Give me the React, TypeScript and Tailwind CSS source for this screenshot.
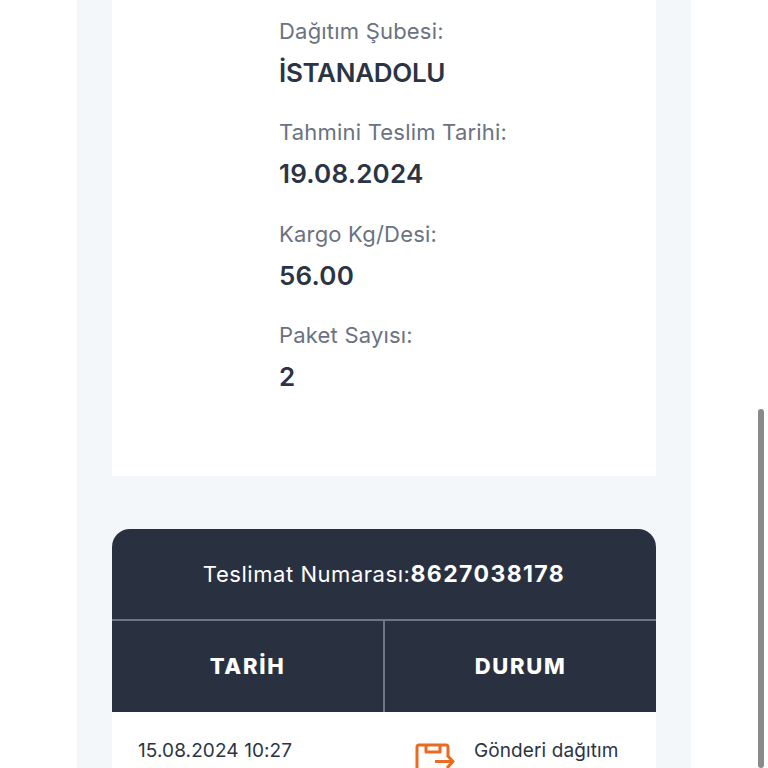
const rows = [
  { label: 'Dağıtım Şubesi:', value: 'İSTANADOLU', valueClass: 'tracking-[-0.3px]' },
  { label: 'Tahmini Teslim Tarihi:', value: '19.08.2024', valueClass: 'tracking-[0.2px]' },
  { label: 'Kargo Kg/Desi:', value: '56.00', valueClass: 'tracking-[0.2px]' },
  { label: 'Paket Sayısı:', value: '2', valueClass: '' },
];

export default function App() {
  return (
    <div className="relative h-[768px] overflow-hidden bg-white font-['Inter',sans-serif]">
      <div className="ml-[77px] h-full w-[614px] bg-[#f3f7fa] px-[35px]">
        <div className="h-[476px] bg-white pl-[167px] pt-[17px]">
          {rows.map((row) => (
            <div key={row.label} className="mb-[21.33px]">
              <div className="h-[28px] text-[22px] leading-[28px] tracking-[0.2px] text-[#6b7280]">{row.label}</div>
              <div className={`mt-[13px] h-[39px] text-[26px] font-semibold leading-[30px] text-[#2b3444] ${row.valueClass}`}>{row.value}</div>
            </div>
          ))}
        </div>
        <div className="mt-[53px]">
          <div className="flex h-[92px] items-center justify-center rounded-t-[18px] border-b-2 border-[#6d7684] bg-[#293140] text-[22px] tracking-[0.55px] text-white">
            Teslimat Numarası:<span className="text-[23px] font-bold tracking-[1.4px]">8627038178</span>
          </div>
          <div className="flex h-[91px] bg-[#293140] text-[22px] font-extrabold tracking-[1.7px] text-white">
            <div className="flex w-[273px] items-center justify-center border-r-2 border-[#6d7684]">TARİH</div>
            <div className="flex flex-1 items-center justify-center">DURUM</div>
          </div>
          <div className="flex h-[100px] bg-white text-[19px] tracking-[0.1px] text-[#2b3444]">
            <div className="w-[273px] pl-[26px] pt-[26px] leading-[26px]">15.08.2024 10:27</div>
            <div className="flex flex-1 pl-[30px] pt-[26px]">
              <svg className="mt-[5px] shrink-0" width="40" height="40" viewBox="0 0 40 40" fill="none" stroke="#ea6a22" strokeWidth="3" strokeLinejoin="round">
                <path d="M2 30V4a2 2 0 0 1 2-2h27a2 2 0 0 1 2 2v10M11 2v7h14V2M20 18.5h18M32 12l6 6.5-6 6.5" />
              </svg>
              <span className="ml-[19px] leading-[26px]">Gönderi dağıtım</span>
            </div>
          </div>
        </div>
      </div>
      <div className="absolute right-[4px] top-[409px] h-[359px] w-[6px] rounded-full bg-[#8a8a8a]" />
    </div>
  );
}
